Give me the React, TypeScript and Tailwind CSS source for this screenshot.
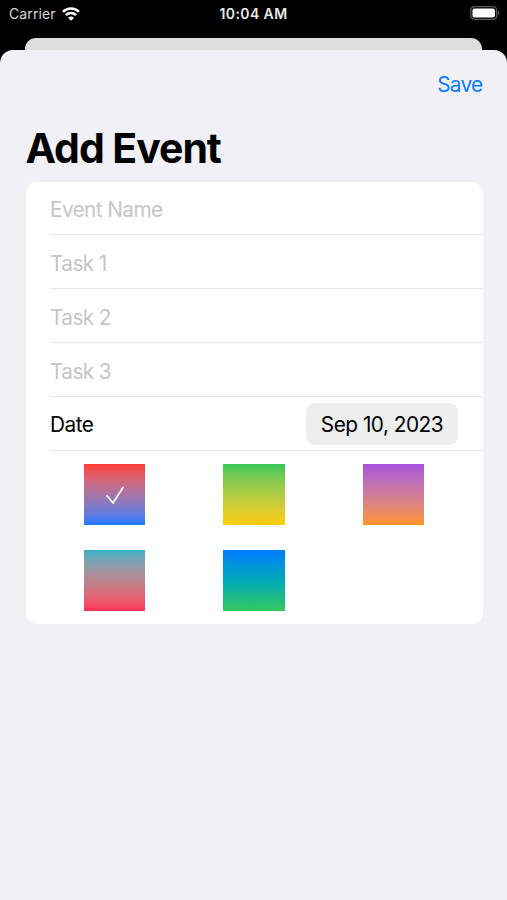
import { useState } from "react";

const fields = ["Event Name", "Task 1", "Task 2", "Task 3"];

const swatches = [
  "from-[#ff3b30] to-[#147aff]",
  "from-[#34c759] to-[#ffcc00]",
  "from-[#a850de] to-[#ff9512]",
  "from-[#30b0c7] to-[#ff2d55]",
  "from-[#007aff] via-[#00a9b5] to-[#34c759]",
];

function WifiIcon() {
  return (
    <svg width="18" height="14" viewBox="0 0 18 14" fill="none" stroke="white" strokeWidth="2.5">
      <path d="M1 4.9a11.4 11.4 0 0 1 16 0" />
      <path d="M3.9 8.2a7.3 7.3 0 0 1 10.2 0" />
      <path d="M9 13.8 6.1 10.9a4.1 4.1 0 0 1 5.8 0Z" fill="white" stroke="none" />
    </svg>
  );
}

function BatteryIcon() {
  return (
    <svg width="31" height="14" viewBox="0 0 31 14">
      <rect x="0.7" y="0.7" width="26" height="12.6" rx="3.6" fill="none" stroke="#5c5c5c" strokeWidth="1.3" />
      <rect x="2.5" y="2.5" width="22.4" height="9" rx="2" fill="white" />
      <path d="M28 4.9c1.7.6 1.7 3.6 0 4.2Z" fill="#5c5c5c" />
    </svg>
  );
}

export default function App() {
  const [selected, setSelected] = useState(0);

  return (
    <div className="flex h-[900px] w-[507px] flex-col overflow-hidden bg-black font-['Inter','Liberation_Sans',sans-serif] text-black">
      <header className="grid h-[38px] shrink-0 grid-cols-3 items-start px-[6px] pt-[6px] text-white">
        <div className="flex items-center gap-[6px] pl-[3px]">
          <span className="text-[14px] leading-[16px] tracking-[0.1px] text-[#d8d8d8]">Carrier</span>
          <WifiIcon />
        </div>
        <span className="text-center text-[14px] leading-[16px] font-semibold tracking-[0.4px] text-[#e8e8e8]">
          10:04 AM
        </span>
        <div className="flex justify-end">
          <BatteryIcon />
        </div>
      </header>

      {/* edge of the screen underneath the sheet */}
      <div className="mx-[25px] h-[12px] shrink-0 rounded-t-[11px] bg-[#dedede]" />

      <main className="flex-1 rounded-t-[13px] bg-[#f1f0f6] pr-[24.5px] pl-[25.5px]">
        <div className="flex h-[70px] items-center justify-end">
          <button className="text-[20.8px] leading-[26px] tracking-[-0.7px] text-[#0a7aff]">Save</button>
        </div>
        <h1 className="h-[61.5px] pt-[3px] text-[41px] leading-[50px] font-bold tracking-[-1.05px]">Add Event</h1>

        <section className="rounded-[12px] bg-white pb-[13.5px]">
          {fields.map((label) => (
            <div key={label} className="flex h-[53.9px] pl-[24.5px]">
              <div className="flex flex-1 items-center border-b border-[#e6e6e8] pt-[3px]">
                <span className="text-[20.8px] tracking-[-0.6px] text-[#c5c5c7]">{label}</span>
              </div>
            </div>
          ))}
          <div className="flex h-[53.9px] pl-[24.5px]">
            <div className="flex flex-1 items-center justify-between border-b border-[#e6e6e8] pt-[1px] pr-[24.5px]">
              <span className="pt-[2px] text-[20.8px] tracking-[-0.5px]">Date</span>
              <button className="flex h-[41.5px] w-[152px] items-center justify-center rounded-[9px] bg-[#eeeeef] pt-[2px] text-[20.8px] tracking-[-0.5px]">
                Sep 10, 2023
              </button>
            </div>
          </div>
          <div className="grid grid-cols-3 justify-items-center gap-x-[9.8px] gap-y-[24.5px] px-[24.5px] pt-[13px]">
            {swatches.map((colors, i) => (
              <button
                key={colors}
                onClick={() => setSelected(i)}
                className={`flex h-[61.2px] w-[61.2px] items-center justify-center bg-linear-to-b ${colors}`}
              >
                {selected === i && (
                  <svg width="20" height="20" viewBox="0 0 20 20" fill="none" stroke="white" strokeWidth="1.7" strokeLinecap="round" strokeLinejoin="round">
                    <path d="M2 10.7 8 18 18 2.5" />
                  </svg>
                )}
              </button>
            ))}
          </div>
        </section>
      </main>
    </div>
  );
}
